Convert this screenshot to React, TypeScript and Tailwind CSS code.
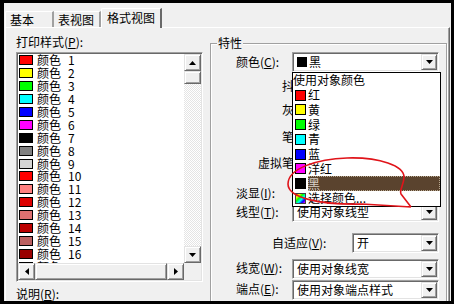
const LEFT_ITEMS: [string, string][] = [
  ["#ff0000", "1"],
  ["#ffff00", "2"],
  ["#00ff00", "3"],
  ["#00ffff", "4"],
  ["#0000ff", "5"],
  ["#ff00ff", "6"],
  ["#000000", "7"],
  ["#808080", "8"],
  ["#d4d4d4", "9"],
  ["#ff0000", "10"],
  ["#ff8080", "11"],
  ["#dd0000", "12"],
  ["#dd7070", "13"],
  ["#bb0000", "14"],
  ["#bb6060", "15"],
  ["#990000", "16"],
  ["#994c4c", "17"],
];

const DROP_ITEMS: [string | null, string][] = [
  [null, "使用对象颜色"],
  ["#ff0000", "红"],
  ["#ffff00", "黄"],
  ["#00ff00", "绿"],
  ["#00ffff", "青"],
  ["#0000ff", "蓝"],
  ["#ff00ff", "洋红"],
  ["#000000", "黑"],
  ["rainbow", "选择颜色..."],
];

const raised =
  "flex items-center justify-center bg-[#f0f0f0] border border-[#e3e3e3] border-r-[#696969] border-b-[#696969] shadow-[inset_1px_1px_0_#fff,inset_-1px_-1px_0_#a0a0a0]";

const sunken =
  "border border-[#a0a0a0] border-r-white border-b-white shadow-[inset_1px_1px_0_#696969,inset_-1px_-1px_0_#e3e3e3]";

function Arrow({ dir }: { dir: "up" | "down" | "left" | "right" }) {
  const vert = dir === "up" || dir === "down";
  const pts = {
    up: "3.5,0 7,4 0,4",
    down: "0,0 7,0 3.5,4",
    left: "4,0 4,7 0,3.5",
    right: "0,0 0,7 4,3.5",
  }[dir];
  return (
    <svg width={vert ? 7 : 4} height={vert ? 4 : 7} viewBox={vert ? "0 0 7 4" : "0 0 4 7"}>
      <polygon points={pts} fill="#000" />
    </svg>
  );
}

function Combo({ wide, children }: { wide: boolean; children: React.ReactNode }) {
  return (
    <div className={`flex h-[20px] items-center bg-white ${sunken} ${wide ? "w-[147px]" : "w-[87px]"}`}>
      <div className="flex flex-1 items-center pl-[4px]">{children}</div>
      <div className={`${raised} mr-[1px] h-[16px] w-[16px]`}>
        <Arrow dir="down" />
      </div>
    </div>
  );
}

function Label({ children }: { children: React.ReactNode }) {
  return <span className="whitespace-nowrap">{children}</span>;
}

export default function App() {
  return (
    <div className="relative h-[304px] w-[454px] overflow-hidden bg-black pb-[3px] pl-[4px] pr-[3px] pt-[3px] font-['Noto_Sans_CJK_SC',sans-serif] text-[12px] leading-[12px] text-black">
      <div className="flex h-full w-full flex-col overflow-hidden bg-[#f0f0f0]">
        {/* tabs */}
        <div className="relative z-10 flex h-[24px] shrink-0 items-end pl-[1px]">
          <div className="flex h-[16px] w-[49px] items-center rounded-tl-[2px] border-l border-t border-white border-r-2 border-r-[#a0a0a0] pl-[4px]">
            基本
          </div>
          <div className="flex h-[16px] w-[47px] items-center border-t border-white border-r-2 border-r-[#a0a0a0] pl-[4px]">
            表视图
          </div>
          <div className="-mb-[1px] flex h-[20px] w-[61px] items-center rounded-tl-[2px] border-l border-t border-white border-r-2 border-r-[#696969] bg-[#f0f0f0] pb-[2px] pl-[5px]">
            格式视图
          </div>
        </div>

        {/* panel */}
        <div className="ml-[1px] flex w-[445px] flex-1 border-l border-t border-white border-r border-r-[#696969] shadow-[inset_-1px_0_0_#a0a0a0]">
          {/* left column */}
          <div className="flex w-[197px] shrink-0 flex-col pl-[10px]">
            <div className="mt-[8px] h-[12px] whitespace-nowrap">
              打印样式(<u>P</u>):
            </div>
            <div className={`mt-[4px] h-[230px] w-[187px] bg-white p-[1px] ${sunken}`}>
              <div className="grid h-full w-full grid-cols-[1fr_17px] grid-rows-[1fr_17px]">
                <div className="overflow-hidden">
                  {LEFT_ITEMS.map(([c, n]) => (
                    <div key={n} className="flex h-[12.9px] items-center">
                      <span className="ml-[1px] h-[10px] w-[14px] shrink-0 border border-black" style={{ background: c }} />
                      <span className="ml-[4px]">颜色</span>
                      <span className="ml-[7px]">{n}</span>
                    </div>
                  ))}
                </div>
                <div className="flex flex-col">
                  <div className={`${raised} h-[17px]`}>
                    <Arrow dir="up" />
                  </div>
                  <div className={`${raised} h-[13px]`} />
                  <div className="flex-1 bg-[conic-gradient(#fff_25%,#e4e4e4_0_50%,#fff_0_75%,#e4e4e4_0)] bg-[length:2px_2px]" />
                  <div className={`${raised} h-[17px]`}>
                    <Arrow dir="down" />
                  </div>
                </div>
                <div className="flex">
                  <div className={`${raised} w-[17px]`}>
                    <Arrow dir="left" />
                  </div>
                  <div className={`${raised} flex-1`} />
                  <div className={`${raised} w-[17px]`}>
                    <Arrow dir="right" />
                  </div>
                </div>
                <div className="bg-[#f0f0f0]" />
              </div>
            </div>
            <div className="mt-[6px] h-[12px] whitespace-nowrap">
              说明(<u>R</u>):
            </div>
          </div>

          {/* properties group */}
          <div className="relative ml-[7px] mt-[15px] h-[280px] w-[237px] shrink-0 border border-[#a0a0a0] shadow-[inset_1px_1px_0_#fff,1px_1px_0_#fff]">
            <span className="absolute -top-[7px] left-[6px] bg-[#f0f0f0] px-[1px]">特性</span>
            <div className="flex flex-col pl-[25px]">
              <div className="mt-[8px] flex h-[20px] items-center">
                <span className="w-[56px]"><Label>颜色(<u>C</u>):</Label></span>
                <Combo wide>
                  <span className="mr-[2px] h-[10px] w-[10px] bg-black" />
                  黑
                </Combo>
              </div>
              {/* rows partly covered by the open list: only the visible part is drawn */}
              <div className="mt-[4px] flex h-[20px] items-center">
                <span className="ml-[46px] w-[10px] overflow-hidden"><Label>抖动</Label></span>
              </div>
              <div className="mt-[4px] flex h-[20px] items-center">
                <span className="ml-[46px] w-[10px] overflow-hidden"><Label>灰度</Label></span>
              </div>
              <div className="mt-[7px] flex h-[20px] items-center">
                <span className="ml-[46px] w-[10px] overflow-hidden"><Label>笔号</Label></span>
              </div>
              <div className="mt-[6px] flex h-[20px] items-center">
                <span className="ml-[22px] w-[34px] overflow-hidden"><Label>虚拟笔号</Label></span>
              </div>
              <div className="mt-[11px] flex h-[18px] items-center">
                <span className="w-[56px]"><Label>淡显(<u>I</u>):</Label></span>
              </div>
              <div className="flex h-[20px] items-center">
                <span className="w-[56px]"><Label>线型(<u>T</u>):</Label></span>
                <Combo wide>使用对象线型</Combo>
              </div>
              <div className="mt-[11px] flex h-[20px] items-center">
                <span className="ml-[36px] w-[80px]"><Label>自适应(<u>V</u>):</Label></span>
                <Combo wide={false}>开</Combo>
              </div>
              <div className="mt-[6px] flex h-[20px] items-center">
                <span className="mb-[2px] w-[56px]"><Label>线宽(<u>W</u>):</Label></span>
                <Combo wide>使用对象线宽</Combo>
              </div>
              <div className="mt-[1px] flex h-[20px] items-center">
                <span className="mb-[2px] w-[56px]"><Label>端点(<u>E</u>):</Label></span>
                <Combo wide>使用对象端点样式</Combo>
              </div>
            </div>

            {/* open colour list */}
            <div className="absolute left-[81px] top-[28px] z-20 w-[149px] border border-black bg-white">
              {DROP_ITEMS.map(([c, t]) => (
                <div key={t} className="flex h-[14.75px] items-center">
                  {c === null ? null : c === "rainbow" ? (
                    <span className="ml-[2px] h-[11px] w-[11px] shrink-0 border border-[#404040] bg-[linear-gradient(135deg,#f00,#ff0,#0f0,#0ff,#00f,#f0f)]" />
                  ) : (
                    <span className="ml-[2px] h-[11px] w-[11px] shrink-0 border border-black" style={{ background: c }} />
                  )}
                  {t === "黑" ? (
                    <span className="ml-[2px] flex h-full flex-1 items-center bg-[#5a432e] text-[#d8d0c8] outline-1 -outline-offset-1 outline-dotted outline-[#b8a890]">
                      黑
                    </span>
                  ) : (
                    <span className={c === null ? "" : "ml-[2px]"}>{t}</span>
                  )}
                </div>
              ))}
            </div>
          </div>
        </div>
      </div>

      {/* red annotation */}
      <svg className="pointer-events-none absolute left-0 top-0 z-30" width="454" height="304" viewBox="0 0 454 304">
        <path
          d="M411 207 L362 204 C320 205 288 198 288 184 C288 168 318 159 347 158 C380 157 404 166 404 177 C404 185 399 190 401 194 L411 207"
          fill="none"
          stroke="#e0141a"
          strokeWidth="1.6"
          strokeLinejoin="round"
        />
      </svg>
    </div>
  );
}
